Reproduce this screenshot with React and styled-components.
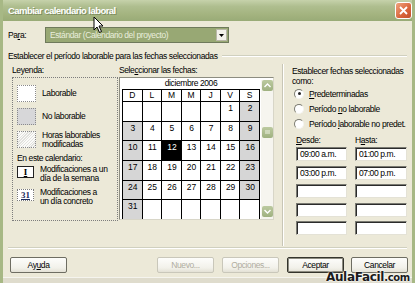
import React from 'react';
import styled, { createGlobalStyle } from 'styled-components';

const GlobalStyle = createGlobalStyle`
  html, body {
    margin: 0;
    padding: 0;
    background: #ece9d8;
  }
  body {
    width: 415px;
    height: 283px;
    overflow: hidden;
    font-family: "Liberation Sans", Arial, sans-serif;
    font-size: 8.5px;
    letter-spacing: -0.4px;
    white-space: nowrap;
    color: #000;
  }
`;

const Window = styled.div`
  position: relative;
  width: 415px;
  height: 283px;
  box-sizing: border-box;
  border-left: 3px solid #a7b885;
  border-right: 3px solid #a7b885;
  background: #ece9d8;
  display: flex;
  flex-direction: column;
  overflow: hidden;
`;

const TitleBar = styled.div`
  height: 21px;
  margin: 0 -3px;
  padding: 0 3px 0 8px;
  display: flex;
  align-items: center;
  background: linear-gradient(#c6d2ab 0%, #afbe8f 30%, #a3b37f 70%, #99ab77 100%);

  .title {
    color: #fff;
    font-weight: bold;
    font-size: 9.5px;
    letter-spacing: -0.55px;
    text-shadow: 1px 1px 0 #7d8d5e;
  }
`;

const CloseButton = styled.div`
  margin-left: auto;
  width: 15px;
  height: 15px;
  border: 1px solid #fff;
  border-radius: 3px;
  background: linear-gradient(135deg, #f0a47e, #d9643a 60%, #c3512a);
  display: flex;
  align-items: center;
  justify-content: center;
`;

const Body = styled.div`
  flex: 1;
  display: flex;
  flex-direction: column;
  padding: 0 2px 0 5px;
`;

const ParaRow = styled.div`
  margin-top: 6px;
  height: 16px;
  display: flex;
  align-items: center;

  .label {
    width: 37px;
  }
`;

const Combo = styled.div`
  width: 178px;
  height: 14px;
  border: 1px solid #6f7a5c;
  background: #98a874;
  color: #e9eedc;
  display: flex;
  align-items: center;
  padding-left: 4px;
  box-sizing: content-box;

  .arrow {
    margin-left: auto;
    margin-right: 1px;
    width: 11px;
    height: 12px;
    background: #f2f1ea;
    border: 1px solid #b9b7a8;
    box-sizing: border-box;
    display: flex;
    align-items: center;
    justify-content: center;
  }
`;

const GroupTitle = styled.div`
  margin-top: 7px;
  height: 11px;
  display: flex;
  align-items: center;

  .line {
    flex: 1;
    margin-left: 4px;
    margin-right: 3px;
    border-top: 1px solid #d0d0bf;
    border-bottom: 1px solid #fff;
  }
`;

const Columns = styled.div`
  margin-top: 4px;
  height: 181px;
  display: flex;
`;

const ColLabel = styled.div`
  height: 12px;
  line-height: 11px;
`;

const LegendCol = styled.div`
  margin-left: 4px;
  width: 106px;
`;

const LegendBox = styled.div`
  height: 144px;
  border: 1px dotted #7d7d7d;
  box-sizing: border-box;
  padding: 4px 0 0 4px;
  display: flex;
  flex-direction: column;
`;

const LegendItem = styled.div`
  display: flex;
  align-items: ${(p) => (p.top ? 'flex-start' : 'center')};
  height: ${(p) => p.h}px;
  line-height: 9px;

  .text {
    margin-left: 6px;
  }
`;

const Swatch = styled.div`
  width: 19px;
  height: 17px;
  flex: none;
  box-sizing: border-box;
  border: 1px dotted #8a8a8a;
  background: ${(p) =>
    p.kind === 'gray'
      ? '#d7d7d9'
      : p.kind === 'hatch'
      ? 'repeating-linear-gradient(135deg, #fbfbf9 0 1px, #e2e2de 1px 2px)'
      : '#fff'};
`;

const MarkBox = styled.div`
  width: 17px;
  height: 12px;
  flex: none;
  box-sizing: border-box;
  border: 1px ${(p) => (p.dotted ? 'dotted #7d7d7d' : 'solid #222')};
  background: #fff;
  margin-top: 1px;
  display: flex;
  align-items: center;
  justify-content: center;
  font-family: "Liberation Serif", serif;
  font-weight: bold;
  font-size: 9px;
  letter-spacing: 0;
  text-decoration: underline;
  color: ${(p) => (p.dotted ? '#1c2a5c' : '#000')};
`;

const CalendarCol = styled.div`
  width: 155px;
  margin-left: 1px;
`;

const CalendarBox = styled.div`
  height: 143px;
  box-sizing: border-box;
  border: 1px solid #8c8c80;
  border-right-color: #d8d6c8;
  border-bottom-color: #d8d6c8;
  background: #fff;
  display: flex;
  padding-left: 2px;
`;

const Month = styled.div`
  width: 138px;
  display: flex;
  flex-direction: column;

  .month-title {
    height: 11px;
    line-height: 11px;
    text-align: center;
    font-size: 8.5px;
  }
`;

const DayGrid = styled.div`
  display: grid;
  grid-template-columns: repeat(7, 1fr);
  grid-template-rows: 11px repeat(6, 18.7px);
  gap: 1px;
  background: #000;
  padding: 1px 1px 0 1px;
`;

const Cell = styled.div`
  background: ${(p) => (p.selected ? '#000' : p.weekend ? '#d6d6d6' : '#fff')};
  color: ${(p) => (p.selected ? '#fff' : '#000')};
  text-align: center;
  line-height: ${(p) => (p.head ? '11px' : '13px')};
  font-size: 8.5px;
  letter-spacing: 0;
  padding-left: ${(p) => (p.head ? 0 : 1)}px;
`;

const ScrollBar = styled.div`
  width: 12px;
  margin-left: 1px;
  margin-top: 2px;
  background: #f6f5ef;
  display: flex;
  flex-direction: column;
  align-items: center;
`;

const ScrollButton = styled.div`
  width: 11px;
  height: 11px;
  border-radius: 2px;
  background: linear-gradient(#bccaa0, #9fb180);
  display: flex;
  align-items: center;
  justify-content: center;
  margin-top: ${(p) => p.mt || 0}px;
`;

const Separator = styled.div`
  margin-left: 8px;
  margin-top: -1px;
  width: 0;
  border-left: 1px solid #c8c6b6;
  border-right: 1px solid #fff;
`;

const RightCol = styled.div`
  margin-left: 8px;
  flex: 1;
  line-height: 10px;
  padding-top: 1px;
`;

const RadioRow = styled.div`
  display: flex;
  align-items: center;
  height: 15px;
  margin-left: 2px;
`;

const Radio = styled.span`
  width: 8px;
  height: 8px;
  border-radius: 50%;
  border: 1px solid #7b7b70;
  border-right-color: #f4f4f0;
  border-bottom-color: #f4f4f0;
  background: #fff;
  margin-right: 5px;
  display: flex;
  align-items: center;
  justify-content: center;

  &::after {
    content: '';
    width: 3px;
    height: 3px;
    border-radius: 50%;
    background: ${(p) => (p.checked ? '#222' : 'transparent')};
  }
`;

const TimeHead = styled.div`
  display: grid;
  grid-template-columns: 59px 52px;
  margin-top: 4px;
  margin-left: 4px;
  height: 10px;
`;

const TimeGrid = styled.div`
  display: grid;
  grid-template-columns: 51px 52px;
  column-gap: 8px;
  row-gap: 4.5px;
  margin-top: 2px;
  margin-left: 4px;
`;

const TimeInput = styled.div`
  height: 14px;
  box-sizing: border-box;
  border: 1px solid #7a7a72;
  border-right-color: #e4e2d6;
  border-bottom-color: #e4e2d6;
  box-shadow: inset 1px 1px 0 #2b2b2b;
  background: #fff;
  padding-left: 3px;
  line-height: 13px;
`;

const FooterLine = styled.div`
  margin: 1px 3px 0 0;
  border-top: 1px solid #d0d0bf;
  border-bottom: 1px solid #fff;
`;

const ButtonRow = styled.div`
  margin-top: 8px;
  display: flex;
  height: 16px;
`;

const Button = styled.div`
  width: 57px;
  height: 16px;
  box-sizing: border-box;
  margin-left: ${(p) => p.ml || 0}px;
  border: 1px solid ${(p) => (p.disabled ? '#c9c7ba' : p.primary ? '#34342c' : '#6e6d62')};
  box-shadow: ${(p) => (p.primary ? 'inset 0 0 0 1px #8d8c80' : 'none')};
  border-radius: 2px;
  background: linear-gradient(#fdfdfb, #f2f1ea 70%, #e3e1d5);
  color: ${(p) => (p.disabled ? '#b0ad9f' : '#000')};
  display: flex;
  align-items: center;
  justify-content: center;
`;

const BottomEdge = styled.div`
  margin-top: auto;
  height: 5px;
  margin-left: -5px;
  margin-right: -2px;
  background: #dfdccd;
  border-top: 1px solid #f5f4ee;
`;

const Watermark = styled.div`
  position: absolute;
  right: 2px;
  bottom: -1px;
  font-family: "DejaVu Sans", sans-serif;
  font-weight: bold;
  font-size: 12px;
  color: #1b1b1b;
  text-shadow: 0 0 2px #fff, 0 0 2px #fff;
  letter-spacing: -0.3px;

  small {
    font-size: 10px;
  }
`;

const Cursor = styled.svg`
  position: absolute;
  left: 90px;
  top: 16px;
`;

const days = [
  ['', '', '', '', '', '1', '2'],
  ['3', '4', '5', '6', '7', '8', '9'],
  ['10', '11', '12', '13', '14', '15', '16'],
  ['17', '18', '19', '20', '21', '22', '23'],
  ['24', '25', '26', '27', '28', '29', '30'],
  ['31', '', '', '', '', '', ''],
];

const Chevron = ({ up }) => (
  <svg width="7" height="5" viewBox="0 0 7 5">
    <path
      d={up ? 'M0.5 4 L3.5 1 L6.5 4' : 'M0.5 1 L3.5 4 L6.5 1'}
      fill="none"
      stroke="#fff"
      strokeWidth="1.4"
    />
  </svg>
);

const App = () => {
  const times = [
    ['09:00 a.m.', '01:00 p.m.'],
    ['03:00 p.m.', '07:00 p.m.'],
    ['', ''],
    ['', ''],
    ['', ''],
  ];

  return (
    <>
      <GlobalStyle />
      <Window>
        <TitleBar>
          <span className="title">Cambiar calendario laboral</span>
          <CloseButton>
            <svg width="9" height="9" viewBox="0 0 9 9">
              <path d="M1 1 L8 8 M8 1 L1 8" stroke="#fff" strokeWidth="1.8" />
            </svg>
          </CloseButton>
        </TitleBar>

        <Body>
          <ParaRow>
            <span className="label">
              Pa<u>r</u>a:
            </span>
            <Combo>
              Estándar (Calendario del proyecto)
              <div className="arrow">
                <svg width="5" height="3" viewBox="0 0 5 3">
                  <path d="M0 0 H5 L2.5 3 Z" fill="#000" />
                </svg>
              </div>
            </Combo>
          </ParaRow>

          <GroupTitle>
            <span>Establecer el período laborable para las fechas seleccionadas</span>
            <div className="line" />
          </GroupTitle>

          <Columns>
            <LegendCol>
              <ColLabel>Leyenda:</ColLabel>
              <LegendBox>
                <LegendItem h={23}>
                  <Swatch />
                  <span className="text">Laborable</span>
                </LegendItem>
                <LegendItem h={23}>
                  <Swatch kind="gray" />
                  <span className="text">No laborable</span>
                </LegendItem>
                <LegendItem h={23}>
                  <Swatch kind="hatch" />
                  <span className="text">
                    Horas laborables
                    <br />
                    modificadas
                  </span>
                </LegendItem>
                <LegendItem h={14}>En este calendario:</LegendItem>
                <LegendItem h={23} top>
                  <MarkBox>I</MarkBox>
                  <span className="text">
                    Modificaciones a un
                    <br />
                    día de la semana
                  </span>
                </LegendItem>
                <LegendItem h={20} top>
                  <MarkBox dotted>31</MarkBox>
                  <span className="text">
                    Modificaciones a
                    <br />
                    un día concreto
                  </span>
                </LegendItem>
              </LegendBox>
            </LegendCol>

            <CalendarCol>
              <ColLabel>
                Sele<u>c</u>cionar las fechas:
              </ColLabel>
              <CalendarBox>
                <Month>
                  <div className="month-title">diciembre 2006</div>
                  <DayGrid>
                    {['D', 'L', 'M', 'M', 'J', 'V', 'S'].map((d, i) => (
                      <Cell key={'h' + i} head>
                        {d}
                      </Cell>
                    ))}
                    {days.map((week, r) =>
                      week.map((d, c) => (
                        <Cell
                          key={r + '-' + c}
                          weekend={d !== '' && (c === 0 || c === 6)}
                          selected={d === '12'}
                        >
                          {d}
                        </Cell>
                      ))
                    )}
                  </DayGrid>
                </Month>
                <ScrollBar>
                  <ScrollButton>
                    <Chevron up />
                  </ScrollButton>
                  <ScrollButton mt={36}>
                    <svg width="5" height="5" viewBox="0 0 5 5">
                      <path d="M0 1 H5 M0 3 H5" stroke="#eef2e4" strokeWidth="1" />
                    </svg>
                  </ScrollButton>
                  <ScrollButton mt={68}>
                    <Chevron />
                  </ScrollButton>
                </ScrollBar>
              </CalendarBox>
            </CalendarCol>

            <Separator />

            <RightCol>
              <div>Establecer fechas seleccionadas</div>
              <div>como:</div>
              <RadioRow>
                <Radio checked />
                <span>
                  <u>P</u>redeterminadas
                </span>
              </RadioRow>
              <RadioRow>
                <Radio />
                <span>
                  Período <u>n</u>o laborable
                </span>
              </RadioRow>
              <RadioRow>
                <Radio />
                <span>
                  Período <u>l</u>aborable no predet.
                </span>
              </RadioRow>
              <TimeHead>
                <span>
                  <u>D</u>esde:
                </span>
                <span>
                  H<u>a</u>sta:
                </span>
              </TimeHead>
              <TimeGrid>
                {times.map((row, i) =>
                  row.map((t, j) => <TimeInput key={i + '-' + j}>{t}</TimeInput>)
                )}
              </TimeGrid>
            </RightCol>
          </Columns>

          <FooterLine />

          <ButtonRow>
            <Button ml={2}>
              Ay<u>u</u>da
            </Button>
            <Button ml={90} disabled>
              Nuevo...
            </Button>
            <Button ml={8} disabled>
              Opciones...
            </Button>
            <Button ml={8} primary>
              Aceptar
            </Button>
            <Button ml={7}>Cancelar</Button>
          </ButtonRow>

          <BottomEdge />
        </Body>

        <Cursor width="12" height="18" viewBox="0 0 12 18">
          <path d="M1 1 L1 14 L4 11 L6.5 16.5 L8.5 15.5 L6 10 L10 10 Z" fill="#fff" stroke="#000" strokeWidth="1" />
        </Cursor>

        <Watermark>
          AulaFacil<small>.com</small>
        </Watermark>
      </Window>
    </>
  );
};

export default App;
